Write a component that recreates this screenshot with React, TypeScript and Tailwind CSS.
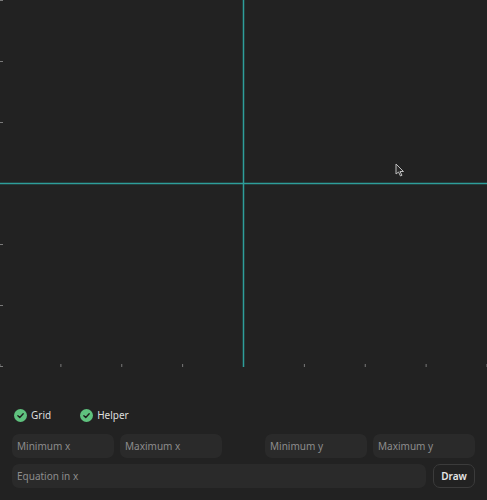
const W = 487;
const H = 367;

function Plot() {
  const xs = Array.from({ length: 9 }, (_, i) => (i * W) / 8);
  const ys = Array.from({ length: 7 }, (_, i) => i * 61);
  return (
    <div className="relative h-[367px] w-full">
      <svg width={W} height={H} className="block">
        {ys.map((y) => (
          <line key={`y${y}`} x1={0} x2={3} y1={y + 0.5} y2={y + 0.5} stroke="#7a7a7a" strokeWidth={1} />
        ))}
        {xs.map((x) => (
          <line key={`x${x}`} x1={x} x2={x} y1={H - 3} y2={H} stroke="#7a7a7a" strokeWidth={1} />
        ))}
        <line x1={0} x2={W} y1={183.5} y2={183.5} stroke="#2e9e9a" strokeWidth={1.5} />
        <line x1={243.5} x2={243.5} y1={0} y2={H} stroke="#2e9e9a" strokeWidth={1.5} />
      </svg>
      {/* mouse pointer captured in the shot */}
      <svg className="absolute left-[395px] top-[163px]" width="10" height="14" viewBox="0 0 10 14">
        <path d="M1 1 L1 11 L3.5 9 L5.5 13 L7 12.3 L5 8.5 L8.5 8.5 Z" fill="#2a2a2a" stroke="#bdbdbd" strokeWidth="1" strokeLinejoin="round" />
      </svg>
    </div>
  );
}

function Check({ label }: { label: string }) {
  return (
    <label className="flex items-center gap-[4px] text-[10px] leading-[13px] text-[#dedede]">
      <span className="flex h-[13px] w-[13px] items-center justify-center rounded-full bg-[#5fc27e]">
        <svg width="9" height="9" viewBox="0 0 12 12">
          <path d="M2.5 6.2 L5 8.6 L9.6 3.6" fill="none" stroke="#1d1d1d" strokeWidth="1.8" strokeLinecap="round" strokeLinejoin="round" />
        </svg>
      </span>
      {label}
    </label>
  );
}

function Field({ placeholder, className = "" }: { placeholder: string; className?: string }) {
  return (
    <input
      placeholder={placeholder}
      className={`h-[24px] rounded-[7px] bg-[#2a2a2a] px-[5px] text-[10px] text-[#dddddd] outline-none placeholder:text-[#8d8d8d] ${className}`}
    />
  );
}

export default function App() {
  return (
    <div
      className="flex h-[500px] w-[487px] flex-col bg-[#222222]"
      style={{ fontFamily: '"Noto Sans", "Open Sans", sans-serif' }}
    >
      <Plot />
      <div className="mt-[42px] flex items-center gap-[29px] pl-[14px]">
        <Check label="Grid" />
        <Check label="Helper" />
      </div>
      <div className="mt-[12px] flex justify-between px-[12px]">
        <div className="flex gap-[6px]">
          <Field placeholder="Minimum x" className="w-[102px]" />
          <Field placeholder="Maximum x" className="w-[102px]" />
        </div>
        <div className="flex gap-[6px]">
          <Field placeholder="Minimum y" className="w-[102px]" />
          <Field placeholder="Maximum y" className="w-[102px]" />
        </div>
      </div>
      <div className="mt-[6px] flex gap-[7px] px-[12px]">
        <Field placeholder="Equation in x" className="min-w-0 flex-1" />
        <button className="h-[24px] w-[42px] rounded-[7px] border border-[#3b3b3b] bg-[#222222] text-[10px] font-semibold text-[#e6e6e6]">
          Draw
        </button>
      </div>
    </div>
  );
}
